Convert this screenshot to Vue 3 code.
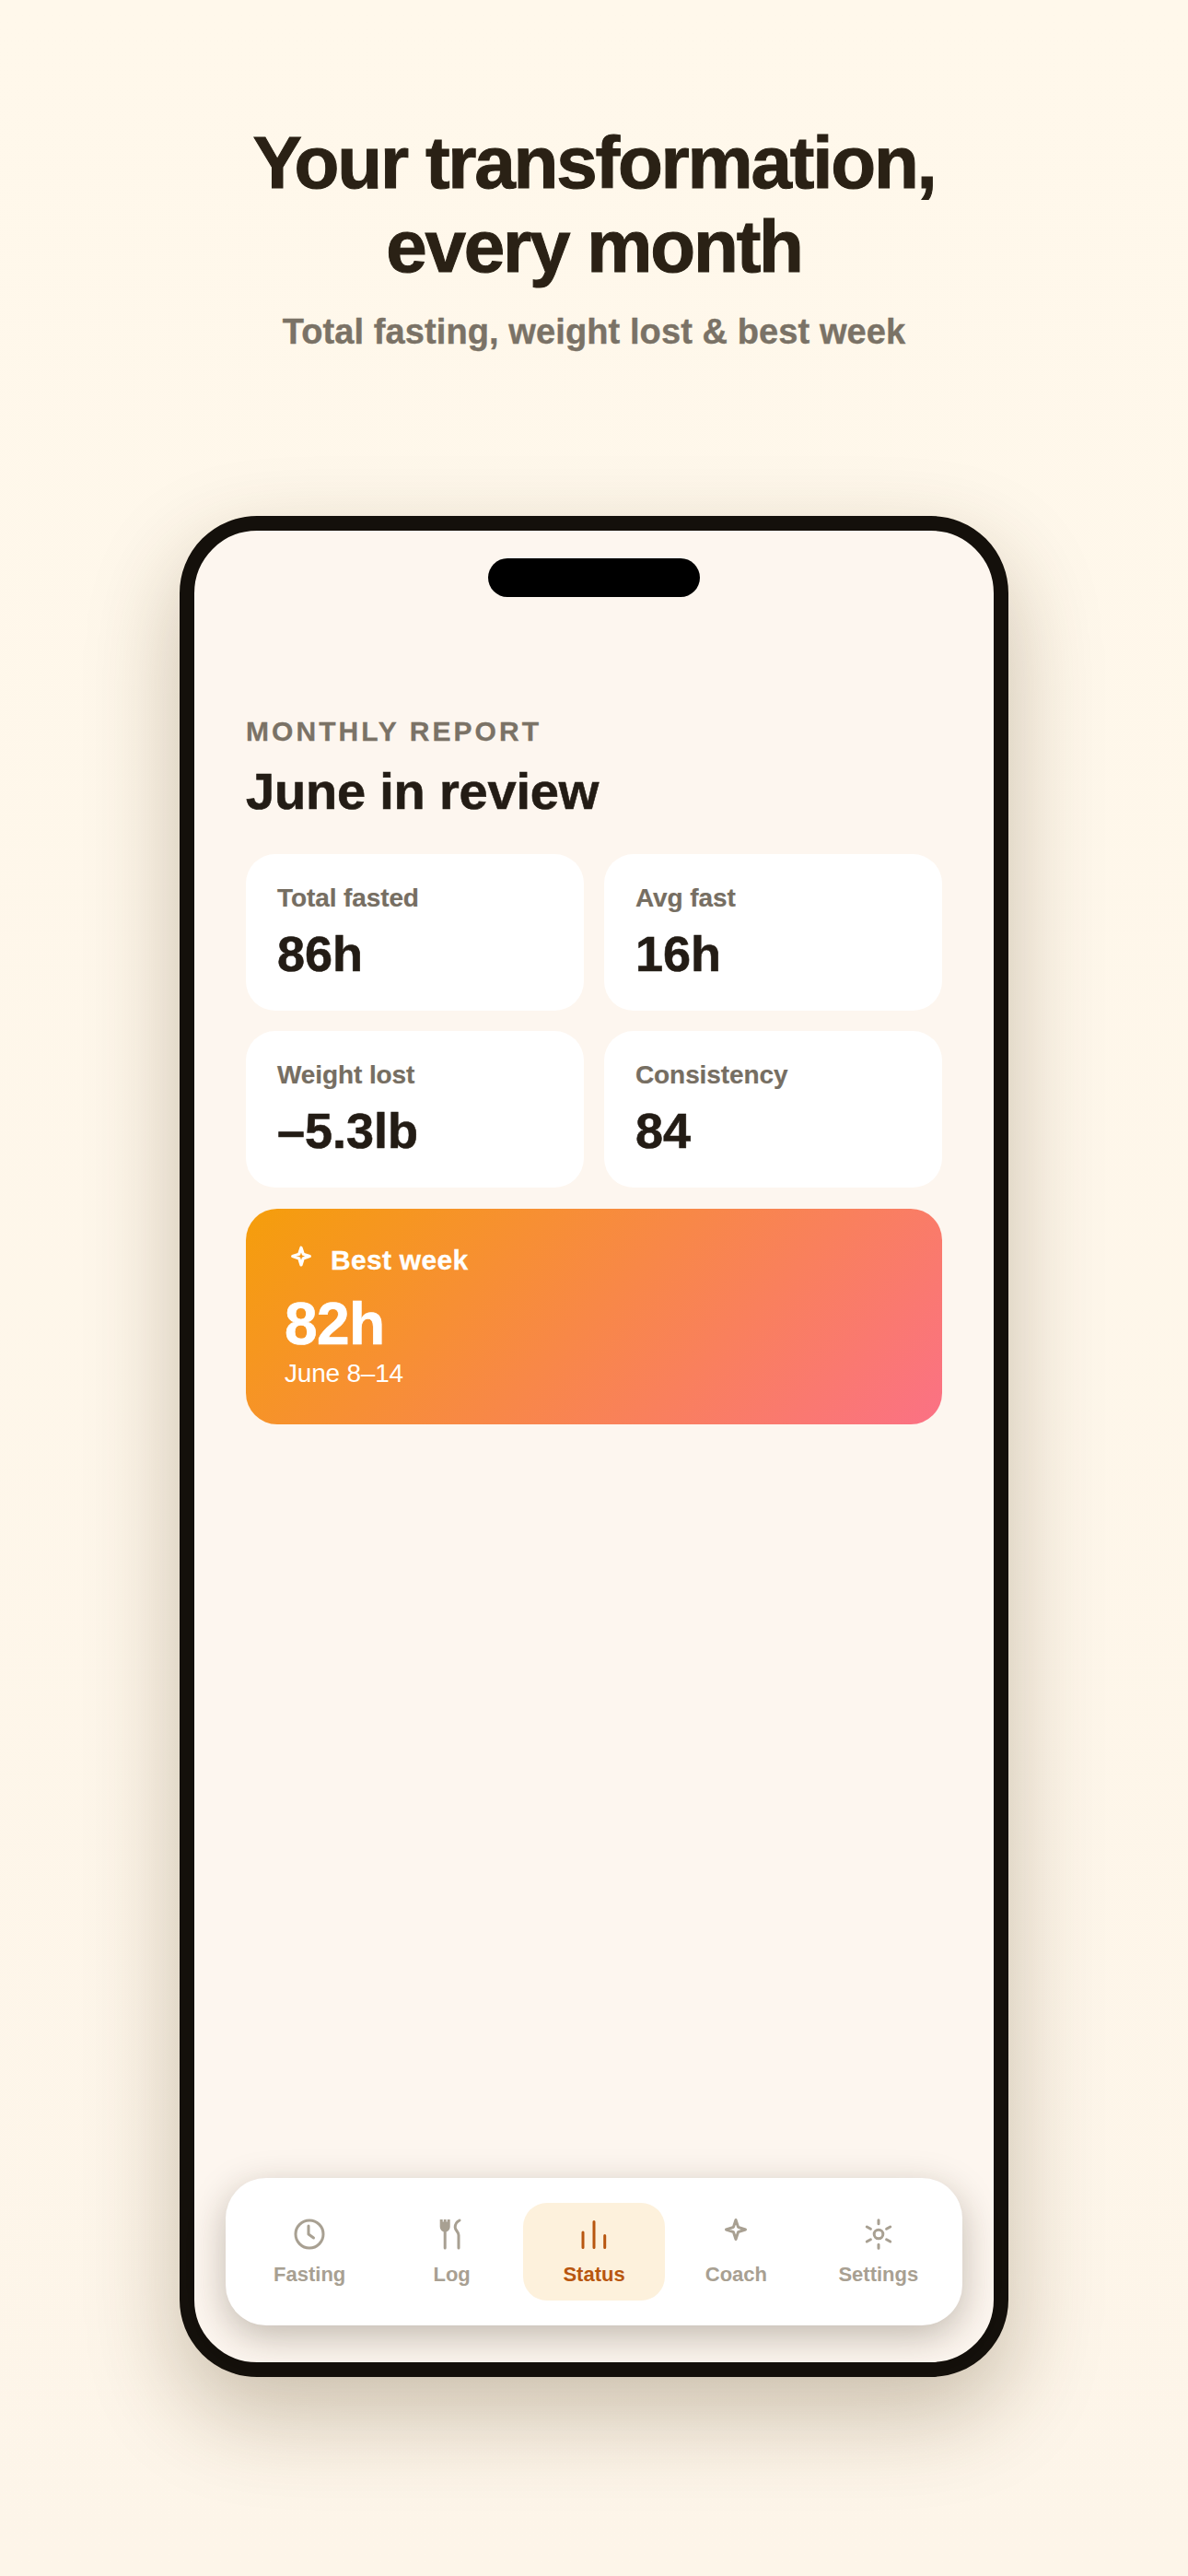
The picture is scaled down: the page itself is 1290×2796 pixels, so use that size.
<template>
  <div class="page">
    <header class="intro">
      <h1>Your transformation,<br />every month</h1>
      <p>Total fasting, weight lost &amp; best week</p>
    </header>

    <div class="phone">
      <div class="island"></div>

      <main class="screen">
        <div class="eyebrow">MONTHLY REPORT</div>
        <h2>June in review</h2>

        <div class="stats">
          <div v-for="stat in stats" :key="stat.label" class="stat">
            <div class="stat-label">{{ stat.label }}</div>
            <div class="stat-value">{{ stat.value }}</div>
          </div>
        </div>

        <section class="best">
          <div class="best-head">
            <svg class="best-icon" viewBox="0 0 36 36" fill="none" stroke="currentColor" stroke-width="3.6" stroke-linejoin="round">
              <path d="M18 2.5 20.6 10.4 28.5 13 20.6 15.6 18 23.5 15.4 15.6 7.5 13 15.4 10.4Z" />
            </svg>
            <span>Best week</span>
          </div>
          <div class="best-value">82h</div>
          <div class="best-date">June 8–14</div>
        </section>
      </main>

      <!-- floating tab bar -->
      <nav class="tabs">
        <div v-for="tab in tabs" :key="tab.label" class="tab" :class="{ active: tab.active }">
          <svg viewBox="0 0 36 36" fill="none" stroke="currentColor" stroke-width="3" stroke-linecap="round" stroke-linejoin="round">
            <template v-if="tab.icon === 'clock'">
              <circle cx="18" cy="18" r="15" />
              <path d="M17 9v9l5.5 4" />
            </template>
            <template v-else-if="tab.icon === 'fork'">
              <path d="M10.2 14v19" />
              <path d="M4.7 2h3v2.6h1.1V2h2.8v2.6h1.1V2h3v8a5.5 5.5 0 0 1-11 0Z" fill="currentColor" stroke="none" />
              <path d="M26 3c-3 1.5-4.8 4.5-4.8 7.5 0 3.5 3.8 4.5 3.8 8.5v14" />
            </template>
            <template v-else-if="tab.icon === 'bars'">
              <path d="M6 16v16.5M18 4.5v28M29.7 19.5v13" />
            </template>
            <template v-else-if="tab.icon === 'star'">
              <path d="M18 2.5 20.6 10.4 28.5 13 20.6 15.6 18 23.5 15.4 15.6 7.5 13 15.4 10.4Z" />
            </template>
            <template v-else>
              <circle cx="18" cy="18" r="4.8" />
              <path d="M18 2.8v3.9M18 29.3v3.9M5.3 10l4.1 2.3M26.6 23.7l4.1 2.3M5.3 26l4.1-2.3M26.6 12.3l4.1-2.3" />
            </template>
          </svg>
          <span>{{ tab.label }}</span>
        </div>
      </nav>
    </div>
  </div>
</template>

<script setup>
const stats = [
  { label: 'Total fasted', value: '86h' },
  { label: 'Avg fast', value: '16h' },
  { label: 'Weight lost', value: '–5.3lb' },
  { label: 'Consistency', value: '84' }
]

const tabs = [
  { label: 'Fasting', icon: 'clock' },
  { label: 'Log', icon: 'fork' },
  { label: 'Status', icon: 'bars', active: true },
  { label: 'Coach', icon: 'star' },
  { label: 'Settings', icon: 'sun' }
]
</script>

<style>
html,
body {
  margin: 0;
  padding: 0;
}
</style>

<style scoped>
.page {
  height: 2796px;
  overflow: hidden;
  background: linear-gradient(180deg, #fff8eb 0%, #fdf5e9 100%);
  font-family: "Liberation Sans", Arial, sans-serif;
  box-sizing: border-box;
  padding-top: 131px;
}
.intro {
  text-align: center;
  margin-bottom: 177px;
}
h1 {
  margin: 0;
  font-size: 80px;
  line-height: 91px;
  font-weight: 700;
  letter-spacing: -2.2px;
  -webkit-text-stroke: 1px #2a2115;
  color: #2a2115;
}
.intro p {
  margin: 24px 0 0;
  font-size: 38px;
  line-height: 46px;
  font-weight: 700;
  letter-spacing: 0.1px;
  -webkit-text-stroke: 0.4px #7a7266;
  color: #7a7266;
}
.phone {
  position: relative;
  width: 900px;
  height: 2020px;
  margin: 0 auto;
  box-sizing: border-box;
  border: 16px solid #14100b;
  border-radius: 84px;
  background: #fdf6ef;
  box-shadow: 0 40px 100px rgba(70, 45, 10, 0.28);
}
.island {
  position: absolute;
  top: 30px;
  left: 319px;
  width: 230px;
  height: 42px;
  border-radius: 21px;
  background: #000;
}
.screen {
  padding: 200px 56px 0;
}
.eyebrow {
  font-size: 30px;
  line-height: 36px;
  font-weight: 700;
  letter-spacing: 3.05px;
  -webkit-text-stroke: 0.3px #7a7266;
  color: #7a7266;
}
h2 {
  margin: 15px 0 36px;
  font-size: 56px;
  line-height: 64px;
  font-weight: 700;
  letter-spacing: -0.2px;
  -webkit-text-stroke: 0.6px #231c15;
  color: #231c15;
}
.stats {
  display: grid;
  grid-template-columns: 1fr 1fr;
  column-gap: 22px;
  row-gap: 22px;
}
.stat {
  background: #fff;
  border-radius: 32px;
  padding: 31px 34px 32px;
}
.stat-label {
  font-size: 28px;
  line-height: 34px;
  font-weight: 700;
  color: #766e62;
  letter-spacing: -0.1px;
  -webkit-text-stroke: 0.2px #766e62;
}
.stat-value {
  margin-top: 13px;
  font-size: 54px;
  line-height: 60px;
  font-weight: 700;
  -webkit-text-stroke: 0.6px #231c15;
  color: #231c15;
}
.best {
  margin-top: 23px;
  padding: 38px 42px;
  border-radius: 34px;
  color: #fff;
  background: linear-gradient(135deg, #f59e0b 0%, #fb7185 100%);
}
.best-head {
  display: flex;
  align-items: center;
  gap: 16px;
  font-size: 30px;
  line-height: 36px;
  font-weight: 700;
  letter-spacing: 0.3px;
  -webkit-text-stroke: 0.3px #fff;
}
.best-icon {
  display: block;
  width: 32px;
  height: 32px;
  margin-left: 2px;
}
.best-value {
  margin-top: 15px;
  font-size: 64px;
  line-height: 72px;
  font-weight: 700;
  letter-spacing: -0.6px;
  -webkit-text-stroke: 0.7px #fff;
}
.best-date {
  margin-top: 1px;
  font-size: 28px;
  line-height: 34px;
  letter-spacing: -0.2px;
}
.tabs {
  position: absolute;
  left: 34px;
  right: 34px;
  bottom: 40px;
  display: flex;
  padding: 27px 14px;
  border-radius: 44px;
  background: #fff;
  box-shadow: 0 12px 40px rgba(40, 30, 10, 0.28);
}
.tab {
  flex: 1;
  display: flex;
  flex-direction: column;
  align-items: center;
  gap: 13px;
  padding: 16px 0 15px;
  border-radius: 26px;
  font-size: 22px;
  line-height: 26px;
  font-weight: 700;
  color: #a8a092;
}
.tab svg {
  display: block;
  width: 36px;
  height: 36px;
}
.tab.active {
  background: #fdf1dc;
  color: #b8560f;
}
</style>
